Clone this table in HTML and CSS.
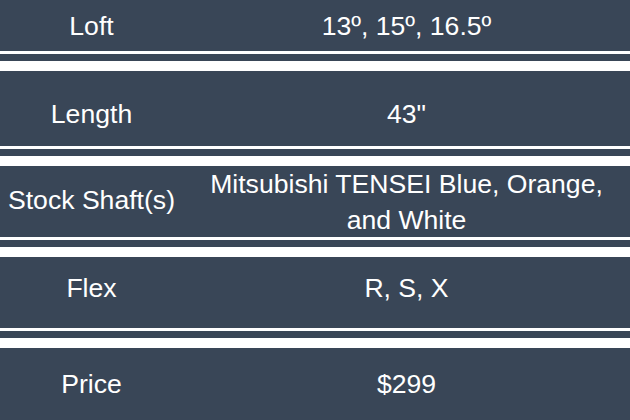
FILE: index.html
```html
<!DOCTYPE html>
<html>
<head>
<meta charset="utf-8">
<link rel="stylesheet" href="styles.css">
</head>
<body>
<div class="specs">
  <div class="row r1"><div class="label">Loft</div><div class="value">13º, 15º, 16.5º</div></div>
  <div class="sep"></div>
  <div class="row r2"><div class="label">Length</div><div class="value">43"</div></div>
  <div class="sep"></div>
  <div class="row r3"><div class="label">Stock Shaft(s)</div><div class="value">Mitsubishi TENSEI Blue, Orange, and White</div></div>
  <div class="sep"></div>
  <div class="row r4"><div class="label">Flex</div><div class="value">R, S, X</div></div>
  <div class="sep"></div>
  <div class="row r5"><div class="label">Price</div><div class="value">$299</div></div>
</div>
</body>
</html>
```
FILE: styles.css
```css
html, body {
  margin: 0;
  padding: 0;
  background: #ffffff;
}
body {
  width: 630px;
  height: 420px;
  overflow: hidden;
  font-family: "Liberation Sans", Arial, sans-serif;
  font-size: 26.6px;
  color: #ffffff;
}
.specs {
  display: flex;
  flex-direction: column;
}
.row {
  display: grid;
  grid-template-columns: 183px 447px;
  align-items: center;
  background: #394657;
  box-sizing: border-box;
  line-height: 36px;
}
.label, .value {
  text-align: center;
  white-space: normal;
}
.label { padding: 0 2px; }
.value { padding: 0 8px; }
.r1 { height: 51px; }
.r2 { height: 75px; padding-top: 11px; }
.r3 { height: 71px; }
.r3 .label { padding-bottom: 4px; }
.r4 { height: 71px; padding-bottom: 9px; }
.r5 { height: 72px; }
.sep {
  height: 7px;
  background: #394657;
  border-top: 3px solid #ffffff;
  border-bottom: 10px solid #ffffff;
}
```
